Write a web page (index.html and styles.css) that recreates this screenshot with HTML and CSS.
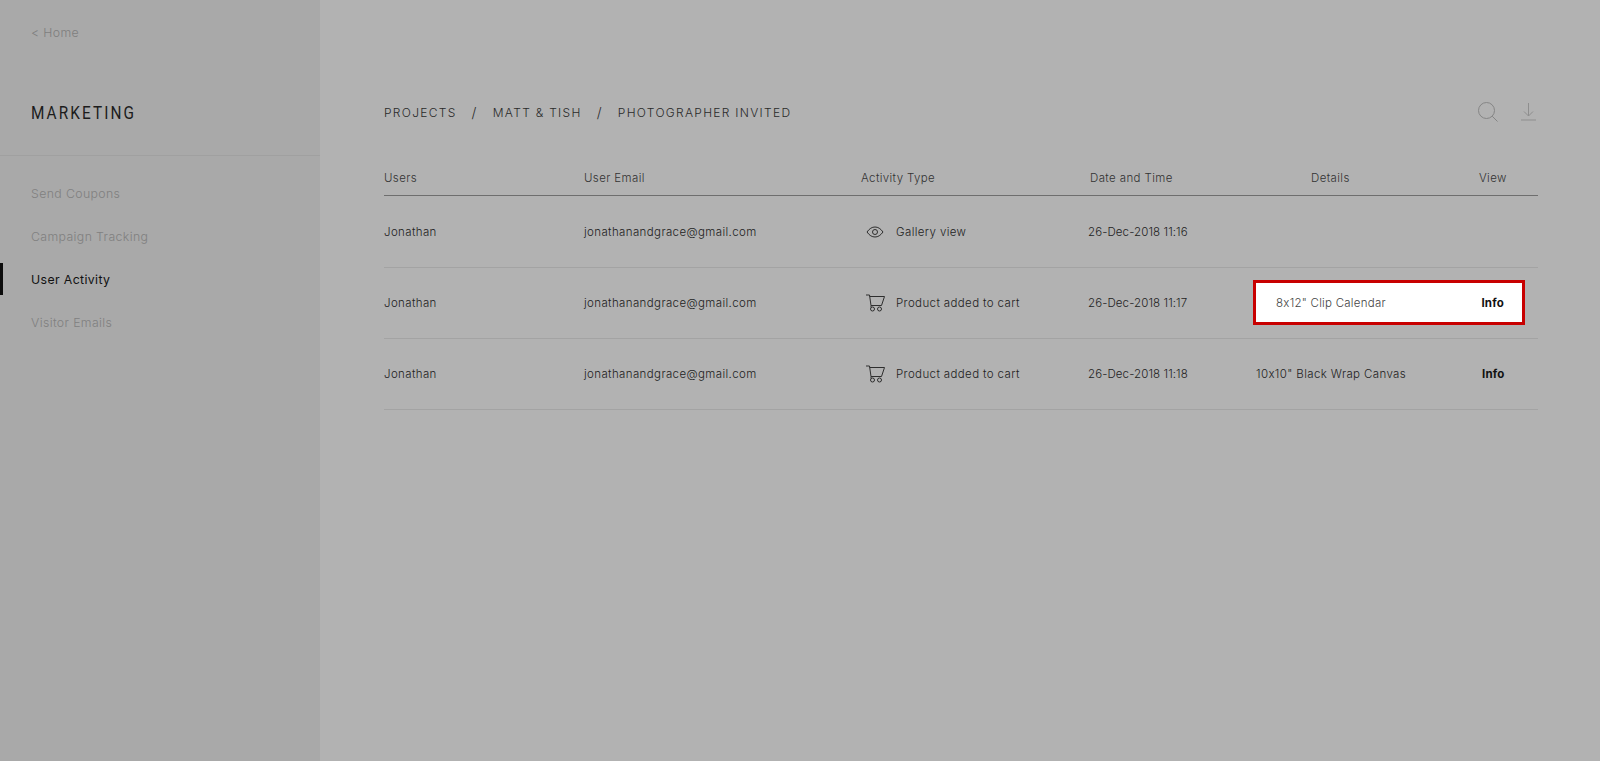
FILE: index.html
```html
<!DOCTYPE html>
<html lang="en">
<head>
<meta charset="UTF-8">
<meta name="viewport" content="width=device-width, initial-scale=1.0">
<title>User Activity</title>
<link rel="stylesheet" href="styles.css">
</head>
<body>
<div class="layout">
  <aside class="sidebar">
    <a class="home-link">&lt; Home</a>
    <div class="sidebar-head">
      <h2 class="sidebar-title">MARKETING</h2>
    </div>
    <nav class="side-nav">
      <a class="side-link">Send Coupons</a>
      <a class="side-link">Campaign Tracking</a>
      <a class="side-link active">User Activity</a>
      <a class="side-link">Visitor Emails</a>
    </nav>
  </aside>

  <main class="content">
    <div class="topbar">
      <div class="breadcrumbs">
        <span>PROJECTS</span>
        <span class="sep">/</span>
        <span>MATT &amp; TISH</span>
        <span class="sep">/</span>
        <span>PHOTOGRAPHER INVITED</span>
      </div>
      <div class="actions">
        <svg width="20" height="20" viewBox="0 0 20 20" fill="none" stroke="#858585" stroke-width="1">
          <circle cx="8.500" cy="8.500" r="8"/>
          <path d="M14.200 14.200L19.500 19.500"/>
        </svg>
        <svg width="15" height="18" viewBox="0 0 15 18" fill="none" stroke="#8e8e8e" stroke-width="1">
          <path d="M7.500 0V13M3 8.500L7.500 13L12 8.500"/>
          <path d="M0 17H15"/>
        </svg>
      </div>
    </div>

    <div class="table-row table-head">
      <div>Users</div>
      <div>User Email</div>
      <div>Activity Type</div>
      <div class="head-date">Date and Time</div>
      <div class="head-details">Details</div>
      <div class="head-view">View</div>
    </div>

    <div class="table-body">
      <div class="table-row">
        <div>Jonathan</div>
        <div>jonathanandgrace@gmail.com</div>
        <div class="activity">
          <svg class="activity-icon" width="19" height="12" viewBox="0 0 19 12" fill="none" stroke="#2e2e2e" stroke-width="1">
            <path d="M1 6C3.500 2.500 6 1 9 1S14.500 2.500 17 6C14.500 9.500 12 11 9 11S3.500 9.500 1 6Z"/>
            <circle cx="9" cy="6" r="2.500"/>
          </svg>
          <span>Gallery view</span>
        </div>
        <div class="date">26-Dec-2018 11:16</div>
        <div></div>
        <div></div>
      </div>

      <div class="table-row">
        <div>Jonathan</div>
        <div>jonathanandgrace@gmail.com</div>
        <div class="activity">
          <svg class="activity-icon" width="19" height="18" viewBox="0 0 19 18" fill="none" stroke="#2e2e2e" stroke-width="1">
            <path d="M0 1H3.500L5 11.500H15.500L18.500 2.500H3.700"/>
            <path d="M5 11.500V13.500"/>
            <circle cx="6.500" cy="15" r="2"/>
            <circle cx="13.500" cy="15" r="2"/>
          </svg>
          <span>Product added to cart</span>
        </div>
        <div class="date">26-Dec-2018 11:17</div>
        <div class="highlight">
          <span class="highlight-name">8x12" Clip Calendar</span>
          <a class="info-link">Info</a>
        </div>
      </div>

      <div class="table-row">
        <div>Jonathan</div>
        <div>jonathanandgrace@gmail.com</div>
        <div class="activity">
          <svg class="activity-icon" width="19" height="18" viewBox="0 0 19 18" fill="none" stroke="#2e2e2e" stroke-width="1">
            <path d="M0 1H3.500L5 11.500H15.500L18.500 2.500H3.700"/>
            <path d="M5 11.500V13.500"/>
            <circle cx="6.500" cy="15" r="2"/>
            <circle cx="13.500" cy="15" r="2"/>
          </svg>
          <span>Product added to cart</span>
        </div>
        <div class="date">26-Dec-2018 11:18</div>
        <div>10x10" Black Wrap Canvas</div>
        <a class="info-link">Info</a>
      </div>
    </div>
  </main>
</div>
</body>
</html>
```

FILE: styles.css
```css
body {
  margin: 0;
  font-family: "Inter", "Open Sans", sans-serif;
  font-size: 11.500px;
  font-weight: 300;
  letter-spacing: 0.380px;
  color: #222;
  background-color: #b2b2b2;
}

.layout {
  display: flex;
  min-height: 761px;
}

.sidebar {
  width: 320px;
  flex-shrink: 0;
  background-color: #a9a9a9;
}

.home-link {
  display: block;
  padding: 25px 0 0 31px;
  line-height: 16px;
  font-size: 12.300px;
  color: #7e7e7e;
}

.sidebar-head {
  padding: 60px 0 30px 31px;
  border-bottom: 1px solid #a0a0a0;
}

.sidebar-title {
  margin: 0;
  line-height: 24px;
  font-family: "Roboto", sans-serif;
  font-size: 18.500px;
  font-weight: 400;
  letter-spacing: 2.500px;
  color: #1c1c1c;
  transform: scaleX(0.83);
  transform-origin: left center;
}

.side-nav {
  display: flex;
  flex-direction: column;
  padding-top: 21px;
}

.side-link {
  height: 31px;
  margin-bottom: 11px;
  padding: 1px 0 0 31px;
  line-height: 32px;
  font-size: 12.300px;
  color: #808080;
}

.side-link.active {
  padding-left: 28px;
  border-left: 3px solid #0c0c0c;
  color: #111;
  font-weight: 400;
}

.content {
  flex: 1;
  padding: 0 62px 0 64px;
}

.topbar {
  display: flex;
  justify-content: space-between;
  align-items: center;
  padding-top: 100px;
  height: 24px;
}

.breadcrumbs {
  display: flex;
  align-items: center;
  font-size: 12px;
  letter-spacing: 1.300px;
  color: #2a2a2a;
}

.sep {
  margin: 0 15px;
  font-size: 14px;
}

.actions {
  display: flex;
  align-items: center;
  gap: 23px;
  padding-right: 2px;
}

.table-row {
  display: grid;
  grid-template-columns: 200px 277px 227px 168px 226px 56px;
  align-items: center;
  box-sizing: border-box;
  height: 71px;
  border-bottom: 1px solid #a3a3a3;
}

.table-head {
  height: 36px;
  margin-top: 36px;
  border-bottom-color: #6e6e6e;
  color: #333;
}

.table-body {
  padding-top: 1px;
}

.head-date {
  margin-left: 2px;
}

.head-details {
  margin-left: 55px;
}

.head-view {
  margin-left: -3px;
}

.activity {
  display: flex;
  align-items: center;
  gap: 11px;
  padding-left: 5px;
}

.activity-icon {
  flex-shrink: 0;
}

.date {
  letter-spacing: 0.100px;
}

.info-link {
  font-weight: 700;
  letter-spacing: 0.200px;
  color: #111;
}

.highlight {
  grid-column: 5 / 7;
  display: flex;
  justify-content: space-between;
  align-items: center;
  box-sizing: border-box;
  width: 272px;
  height: 45px;
  margin: 0 0 2px -3px;
  padding: 2px 18px 0 20px;
  border: 3px solid #c80000;
  background-color: #fff;
  color: #444;
}

.highlight-name {
  letter-spacing: 0.250px;
}
```
